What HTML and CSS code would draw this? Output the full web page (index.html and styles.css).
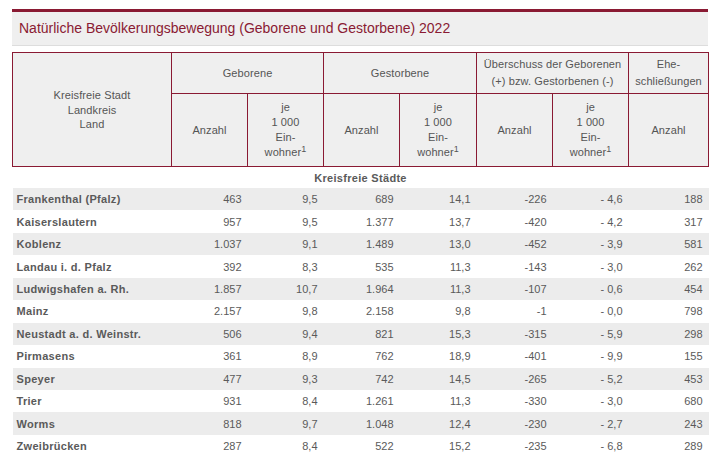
FILE: index.html
```html
<!DOCTYPE html>
<html lang="de">
<head>
<meta charset="utf-8">
<title>Natürliche Bevölkerungsbewegung 2022</title>
<link rel="stylesheet" href="styles.css">
</head>
<body>
<div class="page">
  <div class="title">Natürliche Bevölkerungsbewegung (Geborene und Gestorbene) 2022</div>
  <table class="tbl">
    <colgroup>
      <col class="c-name"><col class="c-n"><col class="c-n"><col class="c-n"><col class="c-n2"><col class="c-n"><col class="c-n"><col class="c-last">
    </colgroup>
    <thead>
      <tr class="h1">
        <th rowspan="2" class="hname">Kreisfreie Stadt<br>Landkreis<br>Land</th>
        <th colspan="2">Geborene</th>
        <th colspan="2">Gestorbene</th>
        <th colspan="2" class="wide">Überschuss der Geborenen<br>(+) bzw. Gestorbenen (-)</th>
        <th class="wide">Ehe-<br>schließungen</th>
      </tr>
      <tr class="h2">
        <th>Anzahl</th>
        <th>je<br>1 000<br>Ein-<br>wohner<sup>1</sup></th>
        <th>Anzahl</th>
        <th>je<br>1 000<br>Ein-<br>wohner<sup>1</sup></th>
        <th>Anzahl</th>
        <th>je<br>1 000<br>Ein-<br>wohner<sup>1</sup></th>
        <th>Anzahl</th>
      </tr>
    </thead>
    <tbody>
      <tr class="section"><td colspan="8">Kreisfreie Städte</td></tr>
      <tr class="odd"><td>Frankenthal (Pfalz)</td><td>463</td><td>9,5</td><td>689</td><td>14,1</td><td>-226</td><td>- 4,6</td><td>188</td></tr>
      <tr><td>Kaiserslautern</td><td>957</td><td>9,5</td><td>1.377</td><td>13,7</td><td>-420</td><td>- 4,2</td><td>317</td></tr>
      <tr class="odd"><td>Koblenz</td><td>1.037</td><td>9,1</td><td>1.489</td><td>13,0</td><td>-452</td><td>- 3,9</td><td>581</td></tr>
      <tr><td>Landau i. d. Pfalz</td><td>392</td><td>8,3</td><td>535</td><td>11,3</td><td>-143</td><td>- 3,0</td><td>262</td></tr>
      <tr class="odd"><td>Ludwigshafen a. Rh.</td><td>1.857</td><td>10,7</td><td>1.964</td><td>11,3</td><td>-107</td><td>- 0,6</td><td>454</td></tr>
      <tr><td>Mainz</td><td>2.157</td><td>9,8</td><td>2.158</td><td>9,8</td><td>-1</td><td>- 0,0</td><td>798</td></tr>
      <tr class="odd"><td>Neustadt a. d. Weinstr.</td><td>506</td><td>9,4</td><td>821</td><td>15,3</td><td>-315</td><td>- 5,9</td><td>298</td></tr>
      <tr><td>Pirmasens</td><td>361</td><td>8,9</td><td>762</td><td>18,9</td><td>-401</td><td>- 9,9</td><td>155</td></tr>
      <tr class="odd"><td>Speyer</td><td>477</td><td>9,3</td><td>742</td><td>14,5</td><td>-265</td><td>- 5,2</td><td>453</td></tr>
      <tr><td>Trier</td><td>931</td><td>8,4</td><td>1.261</td><td>11,3</td><td>-330</td><td>- 3,0</td><td>680</td></tr>
      <tr class="odd"><td>Worms</td><td>818</td><td>9,7</td><td>1.048</td><td>12,4</td><td>-230</td><td>- 2,7</td><td>243</td></tr>
      <tr><td>Zweibrücken</td><td>287</td><td>8,4</td><td>522</td><td>15,2</td><td>-235</td><td>- 6,8</td><td>289</td></tr>
    </tbody>
  </table>
</div>
</body>
</html>
```
FILE: styles.css
```css
html, body {
  margin: 0;
  padding: 0;
  background: #ffffff;
}
body {
  font-family: "Liberation Sans", Arial, sans-serif;
  color: #555555;
}
.page {
  padding: 9px 9px 0 12px;
  width: 696px;
}
.title {
  border-top: 3px solid #8a1a33;
  border-bottom: 1px solid #dddddd;
  background: #efefef;
  height: 33px;
  line-height: 32px;
  padding-left: 7px;
  font-size: 14px;
  color: #8a1a33;
}
.tbl {
  margin-top: 6px;
  width: 696px;
  border-collapse: collapse;
  table-layout: fixed;
  font-size: 11px;
}
.c-name { width: 159px; }
.c-n { width: 76px; }
.c-n2 { width: 77px; }
.c-last { width: 80px; }
.tbl th {
  border: 1px solid #8a1a33;
  background: #efefef;
  font-weight: normal;
  text-align: center;
  vertical-align: middle;
  line-height: 15px;
  padding: 0 2px;
  color: #555555;
  letter-spacing: 0.1px;
}
.tbl .h1 { height: 41px; }
.tbl .h2 { height: 73px; }
.tbl th.hname { line-height: 14.5px; padding-top: 1px; }
.tbl th.wide { line-height: 17px; }
.tbl sup {
  font-size: 9px;
  line-height: 0;
  vertical-align: 4px;
}
.tbl td {
  height: 22.45px;
  padding: 0 6px 0 0;
  text-align: right;
  line-height: 14px;
  vertical-align: middle;
  white-space: nowrap;
  color: #5a5a5a;
}
.tbl td:first-child {
  text-align: left;
  padding-left: 4px;
  font-weight: bold;
  letter-spacing: 0.3px;
}
.tbl tr.section td {
  height: 21px;
  text-align: center;
  font-weight: bold;
  padding: 0;
  letter-spacing: 0.3px;
}
.tbl tr.odd td {
  background: #ececec;
}
```
